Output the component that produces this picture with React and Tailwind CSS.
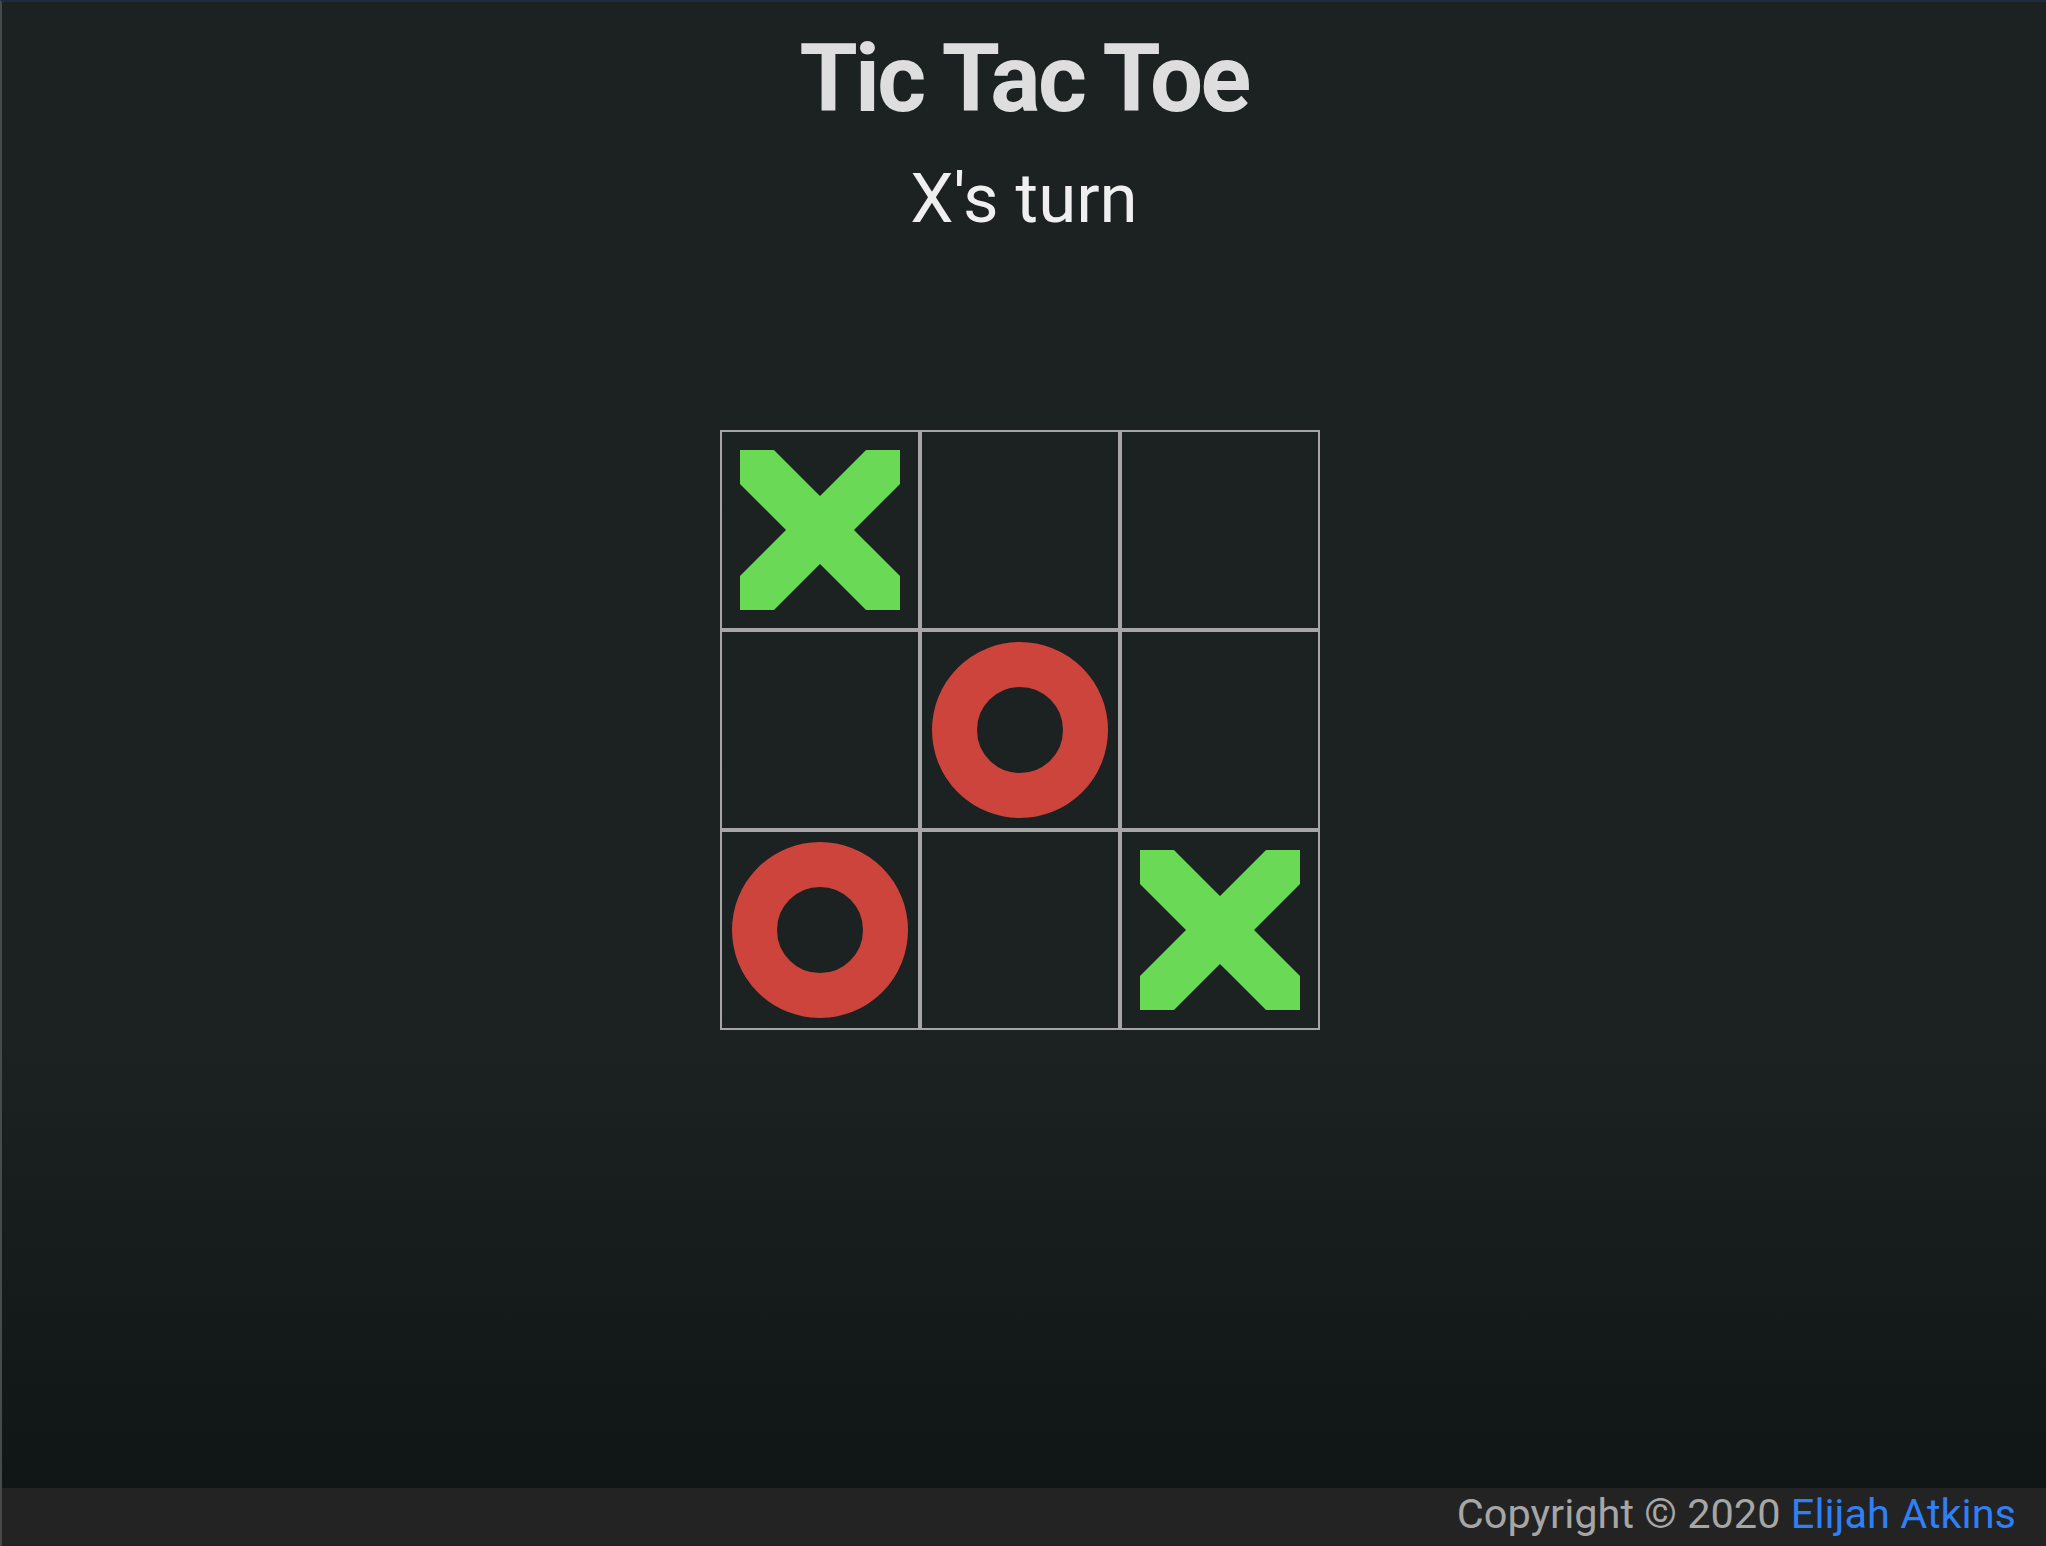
import React from "react";

const board = ["X", "", "", "", "O", "", "O", "", "X"];

function XMark() {
  return (
    <svg width="160" height="160" viewBox="0 0 160 160">
      <line x1="-20" y1="-20" x2="180" y2="180" stroke="#6ad955" strokeWidth="48" />
      <line x1="180" y1="-20" x2="-20" y2="180" stroke="#6ad955" strokeWidth="48" />
    </svg>
  );
}

function OMark() {
  return (
    <svg width="176" height="176" viewBox="0 0 176 176">
      <circle cx="88" cy="88" r="65.5" fill="none" stroke="#cc443c" strokeWidth="45" />
    </svg>
  );
}

function Cell({ value }) {
  return (
    <div className="w-[200px] h-[200px] border-2 border-[#a6a6a6] flex items-center justify-center cursor-pointer">
      {value === "X" && <XMark />}
      {value === "O" && <OMark />}
    </div>
  );
}

export default function App() {
  return (
    <div
      className="min-h-screen flex flex-col border-l-2 border-[#474a4a] border-t-2 border-t-[#1c2a45]"
      style={{ fontFamily: "Roboto, 'Noto Sans', sans-serif" }}
    >
      {/* Game area */}
      <main className="flex-1 flex flex-col items-center bg-gradient-to-b from-[#1b2221] from-[70%] to-[#0f1615]">
        <h1 className="mt-[30px] text-[94px] leading-none font-bold tracking-[-2.7px] text-[#dedede]">
          Tic Tac Toe
        </h1>
        <h2 className="mt-[38px] text-[69px] leading-none font-normal text-[#efefef]">
          X's turn
        </h2>
        <div className="mt-[197px] mr-[8px] grid grid-cols-3 w-[600px]">
          {board.map((v, i) => (
            <Cell key={i} value={v} />
          ))}
        </div>
      </main>

      {/* Footer */}
      <footer className="h-[58px] shrink-0 bg-[#232323] flex items-start justify-end pr-[30px] pt-[5px] text-[41.5px] leading-none text-[#a6a6a6]">
        <span>
          Copyright © 2020{" "}
          <a href="#" className="text-[#2f7ff5]">
            Elijah Atkins
          </a>
        </span>
      </footer>
    </div>
  );
}
